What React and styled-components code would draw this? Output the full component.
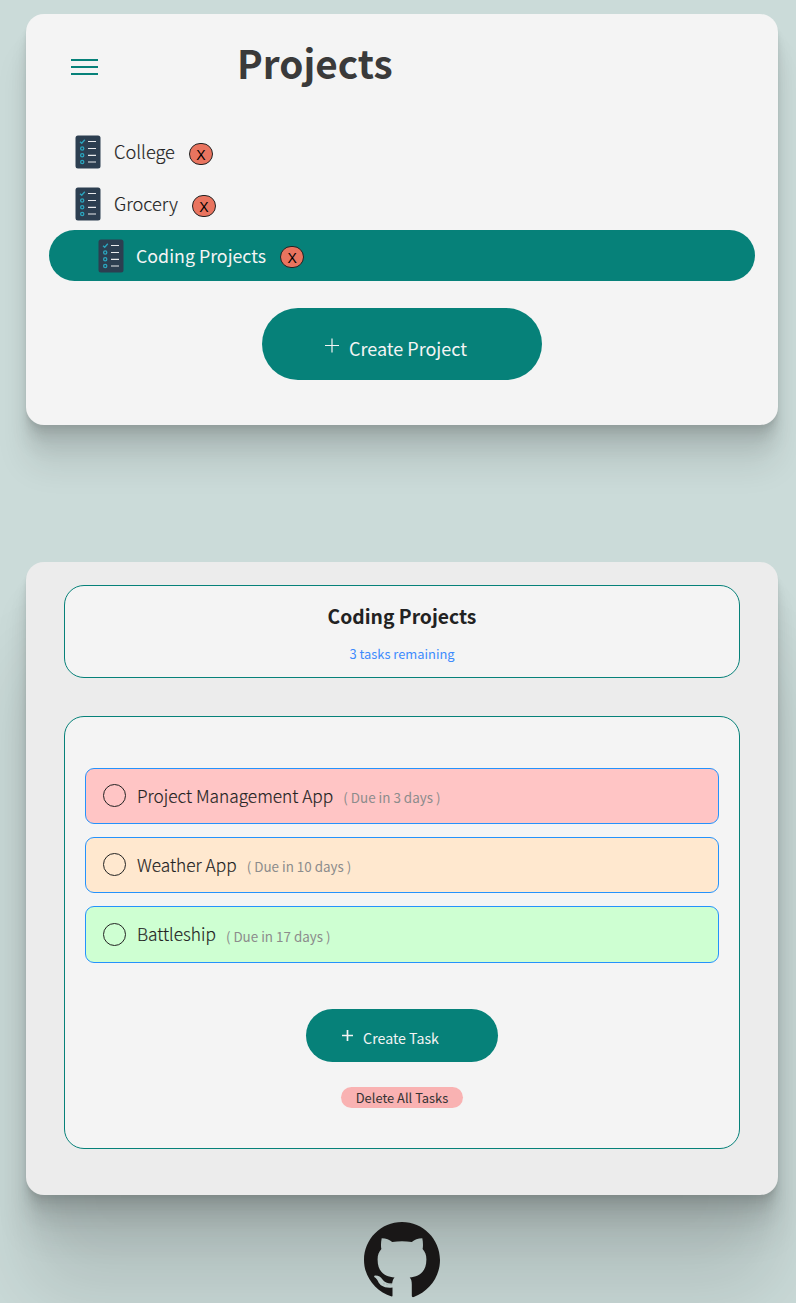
import React from "react";
import styled, { createGlobalStyle } from "styled-components";

const Global = createGlobalStyle`
  * { box-sizing: border-box; }
  body {
    margin: 0;
    background: #cbdbd9;
    font-family: "Noto Sans CJK SC", "Noto Sans", sans-serif;
    color: #222;
  }
  button { font-family: inherit; border: 0; padding: 0; margin: 0; cursor: pointer; }
  h1, h2, p, ul { margin: 0; padding: 0; }
`;

const Page = styled.main`
  height: 1303px;
  overflow: hidden;
  padding: 14px 18px 0 26px;
  display: flex;
  flex-direction: column;
`;

const Panel = styled.section`
  flex: none;
  border-radius: 18px;
  display: flex;
  flex-direction: column;
`;

const ProjectsPanel = styled(Panel)`
  height: 411px;
  background: #f4f4f4;
  box-shadow:
    0 2.8px 2.2px rgba(0, 0, 0, 0.034),
    0 6.7px 5.3px rgba(0, 0, 0, 0.048),
    0 12.5px 10px rgba(0, 0, 0, 0.06),
    0 22.3px 17.9px rgba(0, 0, 0, 0.072),
    0 41.8px 33.4px rgba(0, 0, 0, 0.086);
  padding: 0 23px;
`;

const TasksPanel = styled(Panel)`
  height: 633px;
  margin-top: 137px;
  padding: 23px 38px 0;
  background: #ececec;
  box-shadow:
    0 2.8px 2.2px rgba(0, 0, 0, 0.034),
    0 6.7px 5.3px rgba(0, 0, 0, 0.048),
    0 12.5px 10px rgba(0, 0, 0, 0.06),
    0 22.3px 17.9px rgba(0, 0, 0, 0.072),
    0 41.8px 33.4px rgba(0, 0, 0, 0.086),
    0 100px 80px rgba(0, 0, 0, 0.12);
`;

const Header = styled.header`
  height: 112px;
  display: flex;
  align-items: flex-start;
  padding-left: 22px;
`;

const MenuButton = styled.button`
  width: 27px;
  height: 16px;
  margin-top: 45px;
  background: none;
  display: flex;
  flex-direction: column;
  justify-content: space-between;
`;

const MenuBar = styled.span`
  height: 2px;
  width: 100%;
  background: #068179;
`;

const Title = styled.h1`
  margin: 18px 0 0 139px;
  font-size: 38.7px;
  line-height: 60px;
  font-weight: 700;
  color: #3a3a3a;
`;

const ProjectList = styled.ul`
  list-style: none;
`;

const ProjectRow = styled.li`
  height: ${(p) => (p.$active ? 51 : 52)}px;
  display: flex;
  align-items: center;
  padding-left: ${(p) => (p.$active ? 49 : 26)}px;
  border-radius: 26px;
  background: ${(p) => (p.$active ? "#068179" : "transparent")};
  color: ${(p) => (p.$active ? "#f4f4f4" : "#222")};
`;

const ProjectName = styled.span`
  margin: -2px 0 0 ${(p) => (p.$active ? 12 : 13)}px;
  font-size: ${(p) => (p.$active ? 17.8 : 18.2)}px;
  line-height: 26px;
  font-weight: ${(p) => (p.$active ? 400 : 300)};
  -webkit-text-stroke: ${(p) => (p.$active ? 0 : 0.15)}px currentColor;
`;

const RemoveButton = styled.button`
  width: 24px;
  height: 22px;
  margin: 3px 0 0 14px;
  border: 1px solid #222;
  border-radius: 11px;
  background: #e9745f;
  color: #000;
  font-family: "Liberation Sans", Arial, sans-serif;
  font-size: 14px;
  line-height: 22px;
`;

const CreateButton = styled.button`
  align-self: center;
  flex: none;
  display: flex;
  justify-content: center;
  align-items: center;
  color: #f4f4f4;
  background: #068179;
  width: ${(p) => (p.$large ? 280 : 192)}px;
  height: ${(p) => (p.$large ? 72 : 53)}px;
  margin-top: ${(p) => (p.$large ? 27 : 46)}px;
  padding: ${(p) => (p.$large ? "8px 12px" : "4px 23px")} 0 0;
  border-radius: 36px;
  font-size: ${(p) => (p.$large ? 18 : 14.2)}px;
  font-weight: 400;
`;

const Plus = styled.svg`
  width: ${(p) => (p.$large ? 14 : 11)}px;
  height: 15px;
  margin: ${(p) => (p.$large ? -6 : -4)}px 10px 0 0;
  stroke: #f4f4f4;
  stroke-width: ${(p) => (p.$large ? 1.2 : 1.7)};
`;

const Summary = styled.div`
  height: 93px;
  border: 1px solid #068179;
  border-radius: 20px;
  background: #f4f4f4;
  text-align: center;
`;

const ProjectTitle = styled.h2`
  margin-top: 16px;
  font-size: 19.3px;
  line-height: 28px;
  font-weight: 700;
`;

const Remaining = styled.p`
  margin-top: 14px;
  font-size: 12.9px;
  line-height: 20px;
  color: #3d8bfd;
`;

const TaskBoard = styled.div`
  height: 433px;
  margin-top: 38px;
  border: 1px solid #068179;
  border-radius: 20px;
  background: #f4f4f4;
  padding: 51px 20px 0;
  display: flex;
  flex-direction: column;
`;

const TaskList = styled.ul`
  list-style: none;
  display: flex;
  flex-direction: column;
  gap: 13px;
`;

const TaskRow = styled.li`
  height: ${(p) => p.$height}px;
  display: flex;
  align-items: center;
  padding-left: 17px;
  border: 1px solid #2492fc;
  border-radius: 9px;
  background: ${(p) => p.$color};
`;

const Check = styled.button`
  width: 23px;
  height: 23px;
  margin-top: -1px;
  border: 1px solid #222;
  border-radius: 50%;
  background: transparent;
`;

const TaskName = styled.span`
  margin: -1px 0 0 11px;
  font-size: 17.3px;
  line-height: 24px;
  font-weight: 300;
  -webkit-text-stroke: 0.15px currentColor;
`;

const Due = styled.span`
  margin: 2px 0 0 10px;
  font-size: 13.4px;
  line-height: 20px;
  color: #8c8c8c;
`;

const DeleteAll = styled.button`
  align-self: center;
  width: 122px;
  height: 21px;
  margin-top: 25px;
  border-radius: 11px;
  background: #f9b2b2;
  color: #333;
  font-size: 12.9px;
  line-height: 21px;
`;

const Footer = styled.footer`
  display: flex;
  justify-content: center;
  margin-top: 27px;
  position: relative;
`;

function ListIcon() {
  return (
    <svg width="26" height="34" viewBox="0 0 26 34" fill="none">
      <rect x="0.5" y="0.5" width="25" height="33" rx="2.5" fill="#2c3e50" />
      <path d="M5 6.8l1.7 1.5L9.8 4.8" stroke="#2ba5be" strokeWidth="1.3" />
      {[13.5, 20.3, 27].map((y) => (
        <circle key={y} cx="7.2" cy={y} r="1.6" stroke="#2ba5be" strokeWidth="1.3" />
      ))}
      <path d="M13 6.5h8M13 13.5h8M13 20.3h8M13 27h8" stroke="#e8eaec" strokeWidth="1.2" />
    </svg>
  );
}

function PlusIcon({ large }) {
  return (
    <Plus $large={large} viewBox={large ? "0 0 14 15" : "0 0 11 15"}>
      <path d={large ? "M0 7.5h14M7 .5v14" : "M0 7.5h11M5.5 2v11"} />
    </Plus>
  );
}

function GithubLogo() {
  return (
    <svg width="76" height="76" viewBox="0 0 76 76">
      <path
        fill="#191717"
        d="M38 0C17 0 0 17 0 38c0 17.100 11.800 31.400 27.700 36.500.500.1.800-.3.800-.8V65.500c-8.500 1-12.700-2.200-14.400-6-1-2.200-2-3.200-3.500-4.200-.8-.8-.5-1.800 1-1.800 3 0 5.300 1.500 6.700 3.800 2.400 3.300 6.200 4.600 9.800 4.200.5-3 1.200-4.700 2.500-5.900-9.300-1-17-5.200-17-18.200 0-4.400 1.300-7.600 3.800-10.300-.7-2.700-.5-7 .3-10.800 4.500 0 7.800 1.700 10.500 3.700 6.500-1 13.100-1 19.600 0 2.700-2 6-3.700 10.500-3.700.8 3.800.9 8.100.3 10.800 2.500 2.700 3.800 5.900 3.800 10.300 0 13-8 17.200-16.700 18.200 1.500 1.300 2.100 3.700 2.100 7.100v11c0 1 .7 1.800 2 1.300C64.700 69.500 76 55.100 76 38 76 17 59 0 38 0Z"
      />
      <path d="M19 61.500q4 1.500 9 1" stroke="#a9b8b5" strokeWidth="1.500" strokeDasharray="2 1.500" fill="none" />
    </svg>
  );
}

const projects = [{ name: "College" }, { name: "Grocery" }, { name: "Coding Projects", active: true }];
const tasks = [
  { name: "Project Management App", days: 3, color: "#ffc5c5", height: 56 },
  { name: "Weather App", days: 10, color: "#ffe8cf", height: 56 },
  { name: "Battleship", days: 17, color: "#ceffd2", height: 57 },
];

export default function App() {
  return (
    <Page>
      <Global />
      <ProjectsPanel>
        <Header>
          <MenuButton aria-label="Menu"><MenuBar /><MenuBar /><MenuBar /></MenuButton>
          <Title>Projects</Title>
        </Header>
        <ProjectList>
          {projects.map((p) => (
            <ProjectRow key={p.name} $active={p.active}>
              <ListIcon />
              <ProjectName $active={p.active}>{p.name}</ProjectName>
              <RemoveButton>X</RemoveButton>
            </ProjectRow>
          ))}
        </ProjectList>
        <CreateButton $large><PlusIcon large />Create Project</CreateButton>
      </ProjectsPanel>
      <TasksPanel>
        <Summary>
          <ProjectTitle>Coding Projects</ProjectTitle>
          <Remaining>3 tasks remaining</Remaining>
        </Summary>
        <TaskBoard>
          <TaskList>
            {tasks.map((t) => (
              <TaskRow key={t.name} $color={t.color} $height={t.height}>
                <Check aria-label="Complete" />
                <TaskName>{t.name}</TaskName>
                <Due>( Due in {t.days} days )</Due>
              </TaskRow>
            ))}
          </TaskList>
          <CreateButton><PlusIcon />Create Task</CreateButton>
          <DeleteAll>Delete All Tasks</DeleteAll>
        </TaskBoard>
      </TasksPanel>
      <Footer><GithubLogo /></Footer>
    </Page>
  );
}
